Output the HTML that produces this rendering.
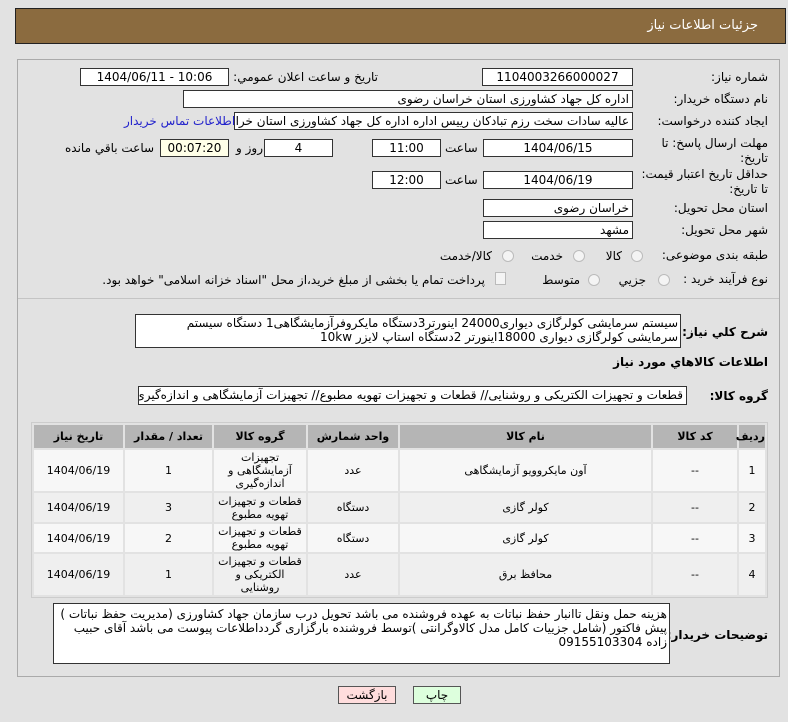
<!DOCTYPE html>
<html><head><meta charset="utf-8"><style>
body{margin:0;width:788px;height:722px;background:#e2e2e2;font-family:"DejaVu Sans","Liberation Sans",sans-serif;font-size:11px;color:#000;position:relative;overflow:hidden}
.a{position:absolute}
.hdr{left:15px;top:8px;width:771px;height:36px;background:#8b6b3f;border:1px solid #222;box-sizing:border-box}
.box{position:absolute;background:#fff;border:1px solid #333;box-sizing:border-box;height:18px;line-height:16px;text-align:center;font-size:12px;white-space:nowrap;overflow:hidden}
.lbl{position:absolute;direction:rtl;text-align:right;white-space:nowrap;font-size:12px}
.rt{text-align:right;direction:rtl;padding-right:3px}
table{border-collapse:separate;border-spacing:2px;background:#e2e2e2;table-layout:fixed}
td{text-align:center;font-size:11px;line-height:13px;padding:0;background:#f7f7f7}
tr.alt td{background:#efefef}
th{background:#b5b5b5;font-size:11px;font-weight:bold;height:23px;padding:0}
.btn{position:absolute;border:1px solid #555;height:18px;line-height:17px;text-align:center;font-size:12px;box-sizing:border-box}
.rad{display:inline-block;width:10px;height:10px;border:1px solid #bbb;border-radius:50%;background:#f4f4f4;vertical-align:middle}
</style></head><body dir="ltr">
<div class="a hdr"></div>
<div class="lbl" style="right:30px;top:18px;color:#fff;font-size:13px">جزئيات اطلاعات نياز</div>
<div class="a" style="left:17px;top:59px;width:763px;height:618px;border:1px solid #aaa;box-sizing:border-box"></div>
<div class="a" style="left:18px;top:298px;width:761px;height:1px;background:#c4c4c4"></div>

<div class="lbl" style="right:20px;top:70px">شماره نياز:</div>
<div class="box" style="left:482px;top:68px;width:151px">1104003266000027</div>
<div class="lbl" style="right:410px;top:70px">تاريخ و ساعت اعلان عمومي:</div>
<div class="box" style="left:80px;top:68px;width:149px">1404/06/11 - 10:06</div>

<div class="lbl" style="right:20px;top:92px">نام دستگاه خريدار:</div>
<div class="box rt" style="left:183px;top:90px;width:450px">اداره کل جهاد کشاورزی استان خراسان رضوی</div>

<div class="lbl" style="right:20px;top:114px">ايجاد کننده درخواست:</div>
<div class="box rt" style="left:234px;top:112px;width:399px">عالیه سادات سخت رزم تبادکان رییس اداره  اداره کل جهاد کشاورزی استان خراسان رضوی</div>
<div class="lbl" style="left:124px;top:114px;color:#2222cc">اطلاعات تماس خريدار</div>

<div class="lbl" style="right:20px;top:136px;line-height:15px">مهلت ارسال پاسخ: تا<br>تاريخ:</div>
<div class="box" style="left:483px;top:139px;width:150px">1404/06/15</div>
<div class="lbl" style="left:445px;top:141px">ساعت</div>
<div class="box" style="left:372px;top:139px;width:69px">11:00</div>
<div class="box" style="left:264px;top:139px;width:69px">4</div>
<div class="lbl" style="left:236px;top:141px">روز و</div>
<div class="box" style="left:160px;top:139px;width:69px;background:#ffffe8">00:07:20</div>
<div class="lbl" style="left:65px;top:141px">ساعت باقي مانده</div>

<div class="lbl" style="right:20px;top:167px;line-height:15px">حداقل تاريخ اعتبار قيمت:<br>تا تاريخ:</div>
<div class="box" style="left:483px;top:171px;width:150px">1404/06/19</div>
<div class="lbl" style="left:445px;top:173px">ساعت</div>
<div class="box" style="left:372px;top:171px;width:69px">12:00</div>

<div class="lbl" style="right:20px;top:201px">استان محل تحويل:</div>
<div class="box rt" style="left:483px;top:199px;width:150px">خراسان رضوی</div>
<div class="lbl" style="right:20px;top:223px">شهر محل تحويل:</div>
<div class="box rt" style="left:483px;top:221px;width:150px">مشهد</div>

<div class="lbl" style="right:20px;top:248px">طبقه بندی موضوعی:</div>
<div class="lbl" style="right:166px;top:249px">کالا</div><span class="a rad" style="left:631px;top:250px"></span>
<div class="lbl" style="right:225px;top:249px">خدمت</div><span class="a rad" style="left:573px;top:250px"></span>
<div class="lbl" style="right:296px;top:249px">کالا/خدمت</div><span class="a rad" style="left:502px;top:250px"></span>

<div class="lbl" style="right:20px;top:272px">نوع فرآيند خريد :</div>
<div class="lbl" style="right:142px;top:273px">جزيي</div><span class="a rad" style="left:658px;top:274px"></span>
<div class="lbl" style="right:208px;top:273px">متوسط</div><span class="a rad" style="left:588px;top:274px"></span>
<span class="a" style="left:495px;top:272px;width:9px;height:11px;border:1px solid #bbb;background:#f4f4f4"></span>
<div class="lbl" style="right:303px;top:273px">پرداخت تمام يا بخشی از مبلغ خريد،از محل "اسناد خزانه اسلامی" خواهد بود.</div>

<div class="lbl" style="right:20px;top:325px;font-weight:bold">شرح کلي نياز:</div>
<div class="a" style="left:135px;top:314px;width:546px;height:34px;background:#fff;border:1px solid #333;box-sizing:border-box;direction:rtl;text-align:right;padding:1px 2px;font-size:12px;line-height:14px;overflow:hidden">سیستم سرمایشی کولرگازی دیواری24000 اینورتر3دستگاه مایکروفرآزمایشگاهی1 دستگاه سیستم سرمایشی کولرگازی دیواری 18000اینورتر 2دستگاه استاپ لایزر 10kw</div>

<div class="lbl" style="right:20px;top:355px;font-weight:bold">اطلاعات کالاهاي مورد نياز</div>
<div class="lbl" style="right:20px;top:389px;font-weight:bold">گروه کالا:</div>
<div class="box rt" style="left:138px;top:386px;width:549px;height:19px">قطعات و تجهیزات الکتریکی و روشنایی//  قطعات و تجهیزات تهویه مطبوع// تجهیزات آزمایشگاهی و اندازه‌گیری</div>

<table class="a" style="left:31px;top:422px;width:737px;direction:rtl;border:1px solid #ccc">
<colgroup><col style="width:26px"><col style="width:84px"><col style="width:251px"><col style="width:90px"><col style="width:92px"><col style="width:87px"><col></colgroup>
<tr><th>رديف</th><th>کد کالا</th><th>نام کالا</th><th>واحد شمارش</th><th>گروه کالا</th><th>تعداد / مقدار</th><th>تاريخ نياز</th></tr>
<tr style="height:41px"><td>1</td><td>--</td><td>آون مایکروویو آزمایشگاهی</td><td>عدد</td><td>تجهيزات<br>آزمايشگاهی و<br>اندازه‌گيری</td><td>1</td><td>1404/06/19</td></tr>
<tr class="alt" style="height:29px"><td>2</td><td>--</td><td>کولر گازی</td><td>دستگاه</td><td>قطعات و تجهيزات<br>تهويه مطبوع</td><td>3</td><td>1404/06/19</td></tr>
<tr style="height:28px"><td>3</td><td>--</td><td>کولر گازی</td><td>دستگاه</td><td>قطعات و تجهيزات<br>تهويه مطبوع</td><td>2</td><td>1404/06/19</td></tr>
<tr class="alt" style="height:41px"><td>4</td><td>--</td><td>محافظ برق</td><td>عدد</td><td>قطعات و تجهيزات<br>الکتريکی و<br>روشنايی</td><td>1</td><td>1404/06/19</td></tr>
</table>

<div class="lbl" style="right:20px;top:628px;font-weight:bold">توضيحات خريدار:</div>
<div class="a" style="left:53px;top:603px;width:617px;height:61px;background:#fff;border:1px solid #333;box-sizing:border-box;direction:rtl;text-align:right;padding:3px 2px;font-size:12px;line-height:14px">هزینه حمل ونقل تاانبار حفظ نباتات به عهده فروشنده می باشد تحویل درب سازمان جهاد کشاورزی (مدیریت حفظ نباتات ) پیش فاکتور (شامل جزییات کامل مدل کالاوگرانتی )توسط فروشنده بارگزاری گردداطلاعات پیوست می باشد آقای حبیب زاده 09155103304</div>

<div class="btn" style="left:338px;top:686px;width:58px;background:#fdd">بازگشت</div>
<div class="btn" style="left:413px;top:686px;width:48px;background:#dfd">چاپ</div>
</body></html>
